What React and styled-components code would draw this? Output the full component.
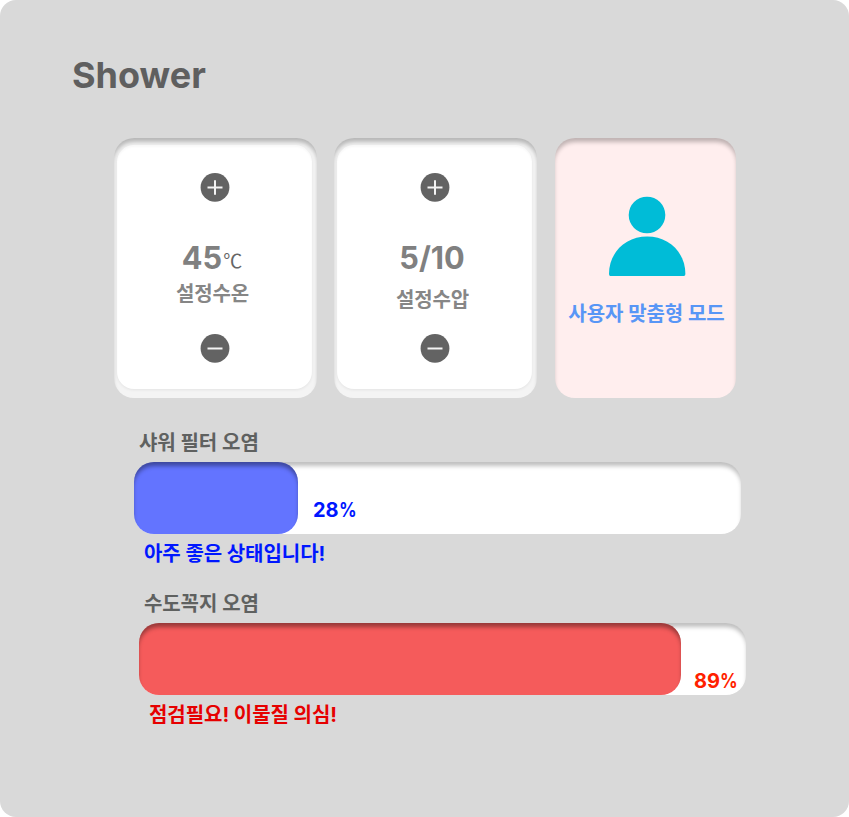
import React from "react";
import styled, { createGlobalStyle } from "styled-components";

const GlobalStyle = createGlobalStyle`
  *, *::before, *::after { box-sizing: border-box; }
  body { margin: 0; background: #fff; }
`;

const Panel = styled.main`
  width: 849px;
  height: 817px;
  padding: 53px 72px 0;
  border-radius: 16px;
  background: #d9d9d9;
  font-family: Inter, "Noto Sans CJK KR", sans-serif;
  overflow: hidden;
`;

const Title = styled.h1`
  margin: 0;
  font-size: 36px;
  line-height: 44px;
  font-weight: 700;
  color: #5f5f5f;
`;

const Cards = styled.section`
  display: flex;
  margin: 41px 0 0 42px;
`;

const Card = styled.div`
  width: ${(p) => p.$width}px;
  height: 260px;
  margin-right: ${(p) => p.$gap || 0}px;
  padding: ${(p) => p.$padding || "0"};
  border-radius: 20px;
  background: ${(p) => p.$background};
  box-shadow: inset 0 5px 4px -1px rgba(0, 0, 0, 0.25);
`;

const CardFace = styled.div`
  display: flex;
  flex-direction: column;
  align-items: center;
  width: 195px;
  height: 244px;
  padding-top: 27px;
  border-radius: 17px;
  background: #fff;
  box-shadow: 0 1px 3px rgba(0, 0, 0, 0.07), inset 0 2px 2px rgba(0, 0, 0, 0.03);
`;

const StepButton = styled.button`
  display: block;
  width: 30px;
  height: 30px;
  padding: 0;
  border: 0;
  background: none;
`;

const Reading = styled.div`
  display: flex;
  align-items: center;
  height: 38px;
  margin-top: 37px;
  margin-right: 5px;
  font-size: 30.7px;
  line-height: 38px;
  font-weight: 700;
  color: #808080;
`;

const Unit = styled.span`
  margin: 3px 0 0 1px;
  font-family: "Noto Sans CJK KR", sans-serif;
  font-size: 19px;
  font-weight: 400;
  line-height: 24px;
  color: #666;
`;

const ReadingLabel = styled.div`
  height: 30px;
  margin: ${(p) => p.$top}px 4px ${(p) => p.$bottom}px 0;
  font-size: 20px;
  line-height: 30px;
  font-weight: 600;
  letter-spacing: -0.1px;
  color: #868686;
`;

const UserMode = styled.div`
  display: flex;
  flex-direction: column;
  align-items: center;
  padding-top: 58px;
`;

const UserIcon = styled.svg`
  display: block;
  width: 78px;
  height: 81px;
  margin-left: 3px;
`;

const UserModeLabel = styled.div`
  margin: 22px 0 0 2px;
  font-size: 20px;
  line-height: 30px;
  font-weight: 600;
  letter-spacing: -0.1px;
  color: #5896f6;
  white-space: nowrap;
`;

const Meter = styled.section`
  margin: ${(p) => p.$top}px 0 0 ${(p) => p.$left}px;
  width: 607px;
`;

const MeterTitle = styled.div`
  height: 30px;
  padding-left: 5px;
  font-size: 20px;
  line-height: 30px;
  font-weight: 600;
  letter-spacing: -0.1px;
  color: #5f6160;
`;

const Track = styled.div`
  display: flex;
  align-items: flex-end;
  height: 72px;
  margin-top: 4px;
  border-radius: 20px;
  background: #fff;
  box-shadow: inset 0 5px 4px -1px rgba(0, 0, 0, 0.25);
`;

const Fill = styled.div`
  width: ${(p) => p.$width}px;
  height: 72px;
  border-radius: 20px;
  background: ${(p) => p.$color};
  box-shadow: inset 0 5px 4px -1px rgba(0, 0, 0, 0.38);
`;

const Percent = styled.span`
  display: flex;
  margin: 0 0 ${(p) => p.$bottom}px ${(p) => p.$left}px;
  font-size: 20px;
  line-height: 24px;
  font-weight: 700;
  color: ${(p) => p.$color};
`;

const PercentSign = styled.span`
  transform: scaleX(0.87);
  transform-origin: left center;
`;

const Status = styled.div`
  height: 30px;
  margin-top: 5px;
  padding-left: 10px;
  font-size: 20px;
  line-height: 30px;
  font-weight: 700;
  letter-spacing: -0.05px;
  color: ${(p) => p.$color};
`;

function Step({ plus }) {
  return (
    <StepButton aria-label={plus ? "+" : "-"}>
      <svg width="30" height="30" viewBox="0 0 30 30">
        <circle cx="15" cy="15.4" r="14.4" fill="#636363" />
        <path
          d={plus ? "M7.5 15.5H22.5M15 8.2V22.8" : "M7.5 15.5H22.5"}
          stroke="#f4f4f4"
          strokeWidth="2"
        />
      </svg>
    </StepButton>
  );
}

function SettingCard({ value, unit, label, gap, labelTop, labelBottom }) {
  return (
    <Card $width={203} $gap={gap} $padding="7px 0 0 3px" $background="#f4f4f4">
      <CardFace>
        <Step plus />
        <Reading>
          {value}
          {unit && <Unit>{unit}</Unit>}
        </Reading>
        <ReadingLabel $top={labelTop} $bottom={labelBottom}>{label}</ReadingLabel>
        <Step />
      </CardFace>
    </Card>
  );
}

export default function App() {
  return (
    <>
      <GlobalStyle />
      <Panel>
        <Title>Shower</Title>
        <Cards>
          <SettingCard value="45" unit="℃" label="설정수온" gap={17} labelTop={2} labelBottom={24} />
          <SettingCard value="5/10" label="설정수압" gap={18} labelTop={8} labelBottom={18} />
          <Card $width={181} $background="#ffeeee">
            <UserMode>
              <UserIcon viewBox="0 0 78 81" fill="#00bcd7">
                <circle cx="39" cy="19" r="18.3" />
                <path d="M1 78C1 56 18 40.6 39.2 40.6S77.4 56 77.4 78Q77.4 80 75.8 80H2.4Q1 80 1 78Z" />
              </UserIcon>
              <UserModeLabel>사용자 맞춤형 모드</UserModeLabel>
            </UserMode>
          </Card>
        </Cards>
        <Meter $top={30} $left={62}>
          <MeterTitle>샤워 필터 오염</MeterTitle>
          <Track>
            <Fill $width={164} $color="#6374ff" />
            <Percent $left={15} $bottom={12} $color="#0017ff">
              28<PercentSign>%</PercentSign>
            </Percent>
          </Track>
          <Status $color="#0017ff">아주 좋은 상태입니다!</Status>
        </Meter>
        <Meter $top={20} $left={67}>
          <MeterTitle>수도꼭지 오염</MeterTitle>
          <Track>
            <Fill $width={542} $color="#f55b5b" />
            <Percent $left={13} $bottom={2} $color="#ff1f00">
              89<PercentSign>%</PercentSign>
            </Percent>
          </Track>
          <Status $color="#e60000">점검필요! 이물질 의심!</Status>
        </Meter>
      </Panel>
    </>
  );
}
